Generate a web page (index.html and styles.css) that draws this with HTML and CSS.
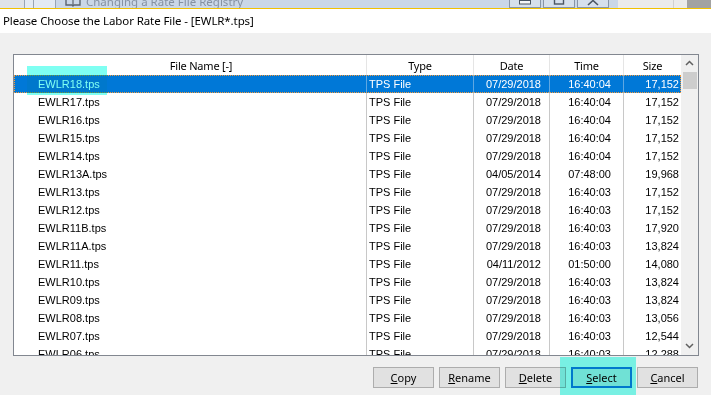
FILE: index.html
```html
<!DOCTYPE html>
<html>
<head>
	<title>Please Choose the Labor Rate File</title>
	<meta charset="utf-8">
	<link rel="stylesheet" href="styles.css">
</head>
<body>
	<!--Window behind the dialog, mostly hidden-->
	<div class="behind">
		<div class="edge"></div>
		<div class="tab small"></div>
		<div class="tab"></div>
		<div class="back-caption">
			<svg class="book" width="16" height="8" viewBox="0 0 16 8">
				<path d="M1 0 L1 6 L7 6 L8 7 L9 6 L15 6 L15 0" fill="none" stroke="#5b6470" stroke-width="1.4"/>
				<path d="M8 0 L8 6" stroke="#5b6470" stroke-width="1.2"/>
			</svg>
			<span>Changing a Rate File Registry</span>
		</div>
		<div class="ctl"><svg width="30" height="7" viewBox="0 0 30 7"><rect x="9.5" y="0.5" width="11" height="3.5" fill="#f4f6f9" stroke="#4a5563"/></svg></div>
		<div class="ctl"><svg width="30" height="7" viewBox="0 0 30 7"><rect x="10.5" y="-3" width="9" height="7" fill="none" stroke="#4a5563" stroke-width="1.4"/></svg></div>
		<div class="ctl"><svg width="30" height="7" viewBox="0 0 30 7"><path d="M10 5 L15 0.5 L20 5" fill="none" stroke="#4a5563" stroke-width="1.6"/></svg></div>
		<div class="gap"></div>
		<div class="side"><i></i></div>
		<div class="dark"></div>
	</div>

	<!--Dialog caption-->
	<div class="title">Please Choose the Labor Rate File - [EWLR*.tps]</div>

	<!--Dialog content-->
	<div class="dialog">
		<div class="list">
			<table>
				<tr>
					<th class="name">File Name [-]</th>
					<th>Type</th>
					<th>Date</th>
					<th>Time</th>
					<th class="last">Size</th>
				</tr>
				<tr class="selected">
					<td class="name">EWLR18.tps</td><td class="type">TPS File</td><td class="date">07/29/2018</td><td class="time">16:40:04</td><td class="size">17,152</td>
				</tr>
				<tr>
					<td class="name">EWLR17.tps</td><td class="type">TPS File</td><td class="date">07/29/2018</td><td class="time">16:40:04</td><td class="size">17,152</td>
				</tr>
				<tr>
					<td class="name">EWLR16.tps</td><td class="type">TPS File</td><td class="date">07/29/2018</td><td class="time">16:40:04</td><td class="size">17,152</td>
				</tr>
				<tr>
					<td class="name">EWLR15.tps</td><td class="type">TPS File</td><td class="date">07/29/2018</td><td class="time">16:40:04</td><td class="size">17,152</td>
				</tr>
				<tr>
					<td class="name">EWLR14.tps</td><td class="type">TPS File</td><td class="date">07/29/2018</td><td class="time">16:40:04</td><td class="size">17,152</td>
				</tr>
				<tr>
					<td class="name">EWLR13A.tps</td><td class="type">TPS File</td><td class="date">04/05/2014</td><td class="time">07:48:00</td><td class="size">19,968</td>
				</tr>
				<tr>
					<td class="name">EWLR13.tps</td><td class="type">TPS File</td><td class="date">07/29/2018</td><td class="time">16:40:03</td><td class="size">17,152</td>
				</tr>
				<tr>
					<td class="name">EWLR12.tps</td><td class="type">TPS File</td><td class="date">07/29/2018</td><td class="time">16:40:03</td><td class="size">17,152</td>
				</tr>
				<tr>
					<td class="name">EWLR11B.tps</td><td class="type">TPS File</td><td class="date">07/29/2018</td><td class="time">16:40:03</td><td class="size">17,920</td>
				</tr>
				<tr>
					<td class="name">EWLR11A.tps</td><td class="type">TPS File</td><td class="date">07/29/2018</td><td class="time">16:40:03</td><td class="size">13,824</td>
				</tr>
				<tr>
					<td class="name">EWLR11.tps</td><td class="type">TPS File</td><td class="date">04/11/2012</td><td class="time">01:50:00</td><td class="size">14,080</td>
				</tr>
				<tr>
					<td class="name">EWLR10.tps</td><td class="type">TPS File</td><td class="date">07/29/2018</td><td class="time">16:40:03</td><td class="size">13,824</td>
				</tr>
				<tr>
					<td class="name">EWLR09.tps</td><td class="type">TPS File</td><td class="date">07/29/2018</td><td class="time">16:40:03</td><td class="size">13,824</td>
				</tr>
				<tr>
					<td class="name">EWLR08.tps</td><td class="type">TPS File</td><td class="date">07/29/2018</td><td class="time">16:40:03</td><td class="size">13,056</td>
				</tr>
				<tr>
					<td class="name">EWLR07.tps</td><td class="type">TPS File</td><td class="date">07/29/2018</td><td class="time">16:40:03</td><td class="size">12,544</td>
				</tr>
				<tr>
					<td class="name">EWLR06.tps</td><td class="type">TPS File</td><td class="date">07/29/2018</td><td class="time">16:40:03</td><td class="size">12,288</td>
				</tr>
			</table>
			<!--Vertical scroll bar-->
			<div class="scroll">
				<div class="arrow"><svg width="17" height="17" viewBox="0 0 17 17"><path d="M5 10 L8.5 6.5 L12 10" fill="none" stroke="#606060" stroke-width="1.5"/></svg></div>
				<div class="thumb"></div>
				<div class="track"></div>
				<div class="arrow"><svg width="17" height="17" viewBox="0 0 17 17"><path d="M5 6 L8.5 9.5 L12 6" fill="none" stroke="#606060" stroke-width="1.5"/></svg></div>
			</div>
		</div>

		<!--Dialog buttons-->
		<div class="buttons">
			<button><u>C</u>opy</button>
			<button><u>R</u>ename</button>
			<button><u>D</u>elete</button>
			<button class="default"><u>S</u>elect</button>
			<button><u>C</u>ancel</button>
		</div>
	</div>

	<!--Highlighter marks laid over the screenshot-->
	<div class="mark mark-file"></div>
	<div class="mark mark-select"></div>
</body>
</html>
```

FILE: styles.css
```css
body{
	margin: 0;
	background: #f0f0f0;
	font-family: "Noto Sans", sans-serif;
	font-size: 12px;
	color: #000;
	position: relative;
	height: 395px;
	overflow: hidden;
}

/* window behind */
.behind{
	display: flex;
	height: 8px;
	overflow: hidden;
	background: #cad7e7;
}

.edge{
	width: 24px;
	background: #dfe3e9;
	border-right: 1px solid #98a4b3;
}

.tab{
	width: 21px;
	background: #e3eaf3;
	border-right: 1px solid #98a4b3;
}

.tab.small{
	width: 8px;
}

.back-caption{
	flex: 1;
	display: flex;
	align-items: flex-end;
	gap: 5px;
	padding-left: 9px;
}

.back-caption span{
	display: block;
	font-size: 11.5px;
	line-height: 12px;
	color: #8591a2;
	white-space: nowrap;
}

.book{
	margin-bottom: 1px;
}

.ctl{
	width: 30px;
	margin-left: 2px;
	background: #d6e0ec;
	border: 1px solid #8794a6;
	border-top: none;
}

.ctl:first-of-type{
	margin-left: 0;
}

.ctl svg{
	display: block;
}

.gap{
	width: 9px;
}

.side{
	width: 69px;
	background: #ebebeb;
}

.side i{
	display: block;
	margin-left: 55px;
	width: 1px;
	height: 8px;
	background: #d0d0d0;
}

.dark{
	width: 24px;
	background: #a2a2a2;
}

/* dialog caption */
.title{
	height: 24px;
	line-height: 24px;
	padding-left: 3px;
	font-size: 11.5px;
	letter-spacing: -0.1px;
	background: #fff;
	border-top: 1px solid #f2c100;
	white-space: nowrap;
}

.dialog{
	padding: 21px 13px 0 13px;
}

/* file list */
.list{
	display: flex;
	width: 686px;
	height: 302px;
	box-sizing: border-box;
	border: 1px solid #828790;
	background: #fff;
	overflow: hidden;
}

table{
	flex: none;
	width: 667px;
	table-layout: fixed;
	border-spacing: 0;
	align-self: flex-start;
}

th{
	height: 20px;
	padding: 0;
	font-size: 11px;
	font-weight: normal;
	letter-spacing: -0.2px;
	text-align: center;
	border-right: 1px solid #e5e5e5;
	box-sizing: border-box;
}

th.name{
	width: 353px;
	padding-left: 22px;
}

th:nth-child(2){
	width: 107px;
}

th:nth-child(3){
	width: 76px;
}

th:nth-child(4){
	width: 74px;
}

th.last{
	border-right: none;
}

td{
	height: 18px;
	padding: 0;
	font-family: "Liberation Sans", Arial, sans-serif;
	font-size: 11px;
	border-right: 1px solid #c8c8c8;
	box-sizing: border-box;
	white-space: nowrap;
}

td.name{
	padding-left: 24px;
}

td.type{
	padding-left: 2px;
}

td.date{
	text-align: right;
	padding-right: 8px;
}

td.time{
	text-align: right;
	padding-right: 12px;
}

td.size{
	text-align: right;
	padding-right: 2px;
	border-right: none;
}

tr.selected td{
	background: #0078d7;
	color: #fff;
	border-right-color: #5ea7e2;
}

tr.selected{
	outline: 1px dotted #f39a3c;
	outline-offset: -1px;
}

/* scroll bar */
.scroll{
	width: 17px;
	display: flex;
	flex-direction: column;
	background: #f0f0f0;
}

.arrow{
	height: 17px;
}

.arrow svg{
	display: block;
}

.thumb{
	height: 17px;
	margin: 0 1px 0 2px;
	background: #cdcdcd;
}

.track{
	flex: 1;
}

/* buttons */
.buttons{
	display: flex;
	justify-content: flex-end;
	gap: 5px;
	margin-top: 11px;
}

button{
	width: 61px;
	height: 21px;
	padding: 0;
	font-family: "Noto Sans", sans-serif;
	font-size: 11px;
	color: #000;
	background: #e1e1e1;
	border: 1px solid #adadad;
}

button.default{
	border: 2px solid #0078d7;
}

/* highlighter */
.mark{
	position: absolute;
	background: #7ffff2;
	mix-blend-mode: multiply;
}

.mark-file{
	left: 27px;
	top: 66px;
	width: 80px;
	height: 29px;
}

.mark-select{
	left: 560px;
	top: 357px;
	width: 76px;
	height: 38px;
}
```
